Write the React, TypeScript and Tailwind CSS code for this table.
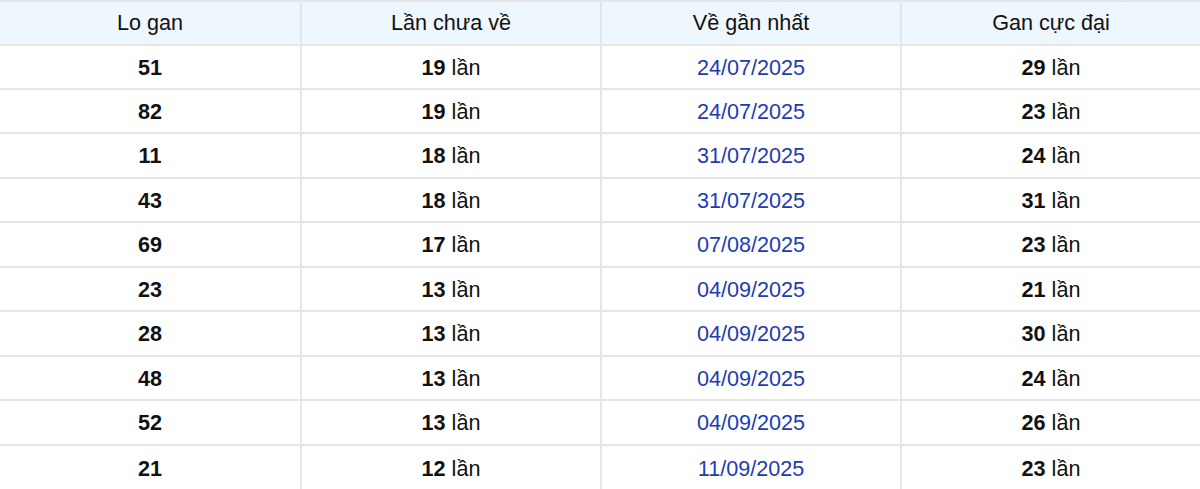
const ROWS = [
  ["51", "19", "24/07/2025", "29"],
  ["82", "19", "24/07/2025", "23"],
  ["11", "18", "31/07/2025", "24"],
  ["43", "18", "31/07/2025", "31"],
  ["69", "17", "07/08/2025", "23"],
  ["23", "13", "04/09/2025", "21"],
  ["28", "13", "04/09/2025", "30"],
  ["48", "13", "04/09/2025", "24"],
  ["52", "13", "04/09/2025", "26"],
  ["21", "12", "11/09/2025", "23"],
];

const HEAD = ["Lo gan", "Lần chưa về", "Về gần nhất", "Gan cực đại"];

export default function App() {
  return (
    <div
      className="w-[1200px] h-[489px] overflow-hidden bg-white text-[21.6px] text-[#111]"
      style={{ fontFamily: '"Liberation Sans", Arial, sans-serif' }}
    >
      <div className="border-t-2 border-[#e6e6e6]">
        {/* Header */}
        <div className="grid grid-cols-4 h-[43.6px] bg-[#eef6fe] border-b-2 border-[#e6e6e6]">
          {HEAD.map((h, i) => (
            <div
              key={h}
              className={`flex items-center justify-center pt-[1px] ${i > 0 ? "border-l-2 border-[#e6e6e6]" : ""}`}
            >
              {h}
            </div>
          ))}
        </div>

        {/* Rows */}
        {ROWS.map((r, idx) => (
          <div
            key={idx}
            className={`grid grid-cols-4 h-[44.45px] ${idx < ROWS.length - 1 ? "border-b-2 border-[#e6e6e6]" : "h-[46px]"}`}
          >
            <div className="flex items-center justify-center pt-[2px] font-bold">{r[0]}</div>
            <div className="flex items-center justify-center pt-[2px] border-l-2 border-[#e6e6e6]">
              <span className="font-bold">{r[1]}</span>&nbsp;lần
            </div>
            <div className="flex items-center justify-center pt-[2px] border-l-2 border-[#e6e6e6] text-[#1d3cb2]">
              {r[2]}
            </div>
            <div className="flex items-center justify-center pt-[2px] border-l-2 border-[#e6e6e6]">
              <span className="font-bold">{r[3]}</span>&nbsp;lần
            </div>
          </div>
        ))}
      </div>
    </div>
  );
}
